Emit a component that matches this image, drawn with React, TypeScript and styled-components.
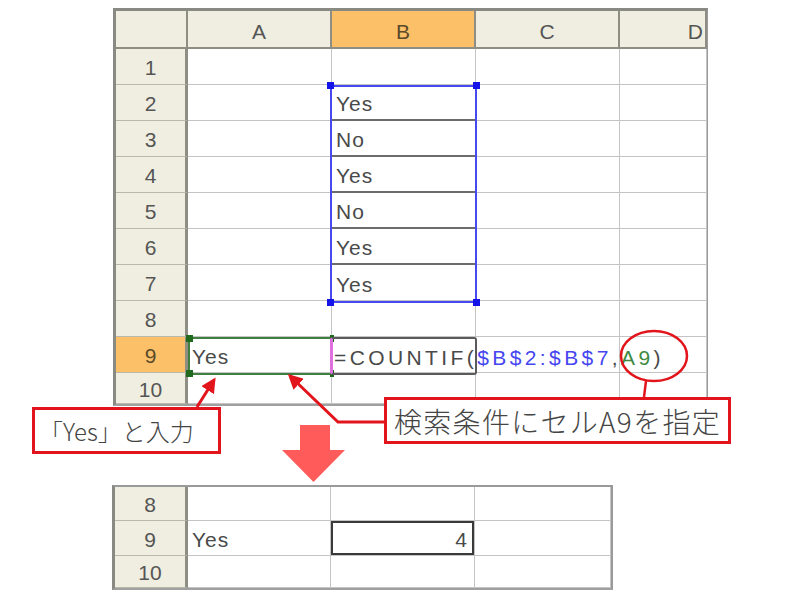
import styled, { createGlobalStyle } from 'styled-components'

const GlobalStyle = createGlobalStyle`
	html, body {
		margin: 0;
		padding: 0;
		background: #fff;
	}
	body {
		font-family: 'Liberation Sans', 'Noto Sans CJK JP', sans-serif;
	}
`

const Page = styled.div`
	position: relative;
	width: 800px;
	height: 598px;
	overflow: hidden;
	background: #fff;
`

type GridProps = {
	cols: string
	rows: string
}

const Sheet = styled.div<GridProps>`
	position: relative;
	display: grid;
	grid-template-columns: ${({ cols }) => cols};
	grid-template-rows: ${({ rows }) => rows};
	border-left: 3px solid #8a8a84;
	border-top: 3px solid #8a8a84;
	border-right: 1px solid #9a9a9a;
	border-bottom: 2px solid #a0a0a0;
	width: max-content;
	color: #4a4a4a;
	font-size: 21px;
`

const TopSheet = styled(Sheet)`
	margin: 8px 0 0 113px;
`

const BottomSheet = styled(Sheet)`
	margin: 79px 0 0 112px;
	border-top: 2px solid #9a9a9a;
	border-right: 2px solid #9a9a9a;
`

type HeadProps = {
	active?: boolean
}

const ColHead = styled.div<HeadProps>`
	display: flex;
	align-items: center;
	justify-content: center;
	padding-top: 6px;
	box-sizing: border-box;
	background: ${({ active }) => (active ? '#fbc068' : '#efeee0')};
	border-right: 2px solid #8e8e84;
	border-bottom: 2px solid #8e8e84;
	color: ${({ active }) => (active ? '#5a4a2a' : '#555')};
`

const RowHead = styled.div<HeadProps>`
	display: flex;
	align-items: center;
	justify-content: center;
	padding-top: 3px;
	box-sizing: border-box;
	background: ${({ active }) => (active ? '#fbc068' : '#efeee0')};
	border-right: 3px solid #8e8e84;
	border-bottom: 1px solid #b8b8ac;
	color: ${({ active }) => (active ? '#5a4a2a' : '#555')};
	overflow: hidden;
`

type CellProps = {
	strong?: boolean
	right?: boolean
	selected?: boolean
}

const Cell = styled.div<CellProps>`
	display: flex;
	align-items: center;
	justify-content: ${({ right }) => (right ? 'flex-end' : 'flex-start')};
	padding: 4px 6px 0 4px;
	box-sizing: border-box;
	border-right: 1px solid #c4c4c4;
	border-bottom: ${({ strong }) => (strong ? '2px solid #6c6c6c' : '1px solid #c4c4c4')};
	box-shadow: ${({ selected }) => (selected ? 'inset 0 0 0 2px #3a3a3a' : 'none')};
	color: #4a4a4a;
	letter-spacing: 1px;
	overflow: hidden;
	white-space: nowrap;
`

const Frame = styled.div<{ color: string }>`
	position: absolute;
	box-sizing: border-box;
	border: 2px solid ${({ color }) => color};
	pointer-events: none;
`

const Handle = styled.span<{ color: string }>`
	position: absolute;
	width: 7px;
	height: 7px;
	background: ${({ color }) => color};
`

const EditBox = styled(Frame)`
	border-radius: 3px;
	border-left: 3px solid #e070e0;
`

const Formula = styled.div`
	position: absolute;
	display: flex;
	align-items: center;
	padding-top: 3px;
	box-sizing: border-box;
	font-size: 21px;
	letter-spacing: 3.4px;
	color: #4a4a4a;
	white-space: nowrap;
`

const Ref = styled.span<{ color: string }>`
	color: ${({ color }) => color};
`

const Callout = styled.div`
	position: absolute;
	box-sizing: border-box;
	display: flex;
	align-items: center;
	border: 3px solid #e2141c;
	background: #fff;
	color: #454545;
	font-family: 'Noto Sans CJK JP', sans-serif;
	font-weight: 300;
	white-space: nowrap;
`

const Overlay = styled.svg`
	position: absolute;
	left: 0;
	top: 0;
	pointer-events: none;
`

const topCols = '72px 144px 144px 144px 87px'
const topRows = '38px repeat(9, 36px) 31px'
const colsTop = ['A', 'B', 'C', 'D']
const bValues: Record<number, string> = { 2: 'Yes', 3: 'No', 4: 'Yes', 5: 'No', 6: 'Yes', 7: 'Yes' }

const App = () => {
	const rows = Array.from({ length: 10 }, (_, i) => i + 1)
	return (
		<Page>
			<GlobalStyle />
			<TopSheet cols={topCols} rows={topRows}>
				<ColHead />
				{colsTop.map((c) => (
					<ColHead key={c} active={c === 'B'}>
						{c === 'D' ? <span style={{ marginLeft: 'auto', marginRight: 2 }}>{c}</span> : c}
					</ColHead>
				))}
				{rows.map((r) => (
					<Row key={r} r={r} />
				))}

				<Frame color="#4848f0" style={{ left: 214, top: 74, width: 147, height: 218 }}>
					<Handle color="#1414e8" style={{ left: -5, top: -5 }} />
					<Handle color="#1414e8" style={{ right: -5, top: -5 }} />
					<Handle color="#1414e8" style={{ left: -5, bottom: -5 }} />
					<Handle color="#1414e8" style={{ right: -5, bottom: -5 }} />
				</Frame>

				<Frame color="#3f7f3f" style={{ left: 72, top: 326, width: 144, height: 38 }}>
					<Handle color="#1f6a1f" style={{ left: -4, top: -4 }} />
					<Handle color="#1f6a1f" style={{ right: -4, top: -4, width: 4 }} />
					<Handle color="#1f6a1f" style={{ left: -4, bottom: -4 }} />
					<Handle color="#1f6a1f" style={{ right: -4, bottom: -4, width: 4 }} />
				</Frame>

				<EditBox color="#5a5a5a" style={{ left: 214, top: 326, width: 147, height: 38 }} />

				<Formula style={{ left: 218, top: 326, height: 38 }}>
					=COUNTIF(
					<Ref color="#4646f0">$B$2:$B$7</Ref>,<Ref color="#3f8a3f">A9</Ref>)
				</Formula>
			</TopSheet>

			<BottomSheet cols="73px 143px 144px 136px" rows="34px 35px 32px">
				<RowHead>8</RowHead>
				<Cell />
				<Cell />
				<Cell />
				<RowHead>9</RowHead>
				<Cell>Yes</Cell>
				<Cell right selected>
					4
				</Cell>
				<Cell />
				<RowHead>10</RowHead>
				<Cell />
				<Cell />
				<Cell />
			</BottomSheet>

			<Callout style={{ left: 32, top: 407, width: 189, height: 47, fontSize: 24, paddingLeft: 4 }}>
				「Yes」と入力
			</Callout>
			<Callout
				style={{ left: 384, top: 397, width: 347, height: 47, fontSize: 28, paddingLeft: 7, letterSpacing: 1.3 }}
			>
				検索条件にセルA9を指定
			</Callout>

			<Overlay width="800" height="598" viewBox="0 0 800 598">
				<defs>
					<marker id="head" viewBox="0 0 10 10" refX="8" refY="5" markerWidth="5" markerHeight="5" orient="auto">
						<path d="M0 0 L10 5 L0 10 z" fill="#e2141c" />
					</marker>
				</defs>
				<line x1="197" y1="407" x2="214" y2="380" stroke="#e2141c" strokeWidth="3" markerEnd="url(#head)" />
				<polyline
					points="384,422 338,422 290,376"
					fill="none"
					stroke="#e2141c"
					strokeWidth="3"
					markerEnd="url(#head)"
				/>
				<ellipse cx="654" cy="356" rx="33" ry="25" fill="none" stroke="#e2141c" strokeWidth="2.5" />
				<line x1="646" y1="381" x2="644" y2="397" stroke="#e2141c" strokeWidth="2.5" />
				<path d="M300 425 H330 V450 H345 L313.5 482 L282 450 H300 Z" fill="#ff5b5b" />
			</Overlay>
		</Page>
	)
}

const Row = ({ r }: { r: number }) => (
	<>
		<RowHead active={r === 9}>{r}</RowHead>
		<Cell>{r === 9 ? 'Yes' : ''}</Cell>
		<Cell strong={r >= 2 && r <= 6}>{bValues[r] ?? ''}</Cell>
		<Cell />
		<Cell />
	</>
)

export default App
